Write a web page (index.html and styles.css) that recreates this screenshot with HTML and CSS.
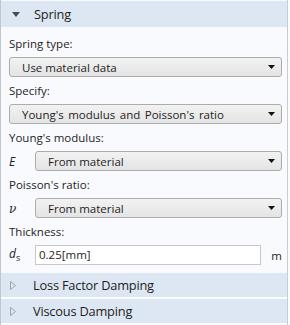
FILE: index.html
```html
<!DOCTYPE html>
<html lang="en">
<head>
  <meta charset="UTF-8">
  <title>Spring settings</title>
  <link rel="stylesheet" href="styles.css">
</head>
<body>
  <div class="panel">
    <div class="section-head">
      <svg class="caret" width="8" height="5" viewBox="0 0 8 5"><path d="M0 0H8L4 5Z" fill="#4a4a4a"/></svg>
      <span>Spring</span>
    </div>
    <div class="section-body">
      <div class="lbl">Spring type:</div>
      <div class="select"><span>Use material data</span><svg class="arrow" width="7" height="4" viewBox="0 0 7 4"><path d="M0 0H7L3.5 4Z" fill="#111"/></svg></div>

      <div class="lbl">Specify:</div>
      <div class="select"><span class="wide">Young's modulus and Poisson's ratio</span><svg class="arrow" width="7" height="4" viewBox="0 0 7 4"><path d="M0 0H7L3.5 4Z" fill="#111"/></svg></div>

      <div class="lbl">Young's modulus:</div>
      <div class="row">
        <span class="sym"><i>E</i></span>
        <div class="select"><span>From material</span><svg class="arrow" width="7" height="4" viewBox="0 0 7 4"><path d="M0 0H7L3.5 4Z" fill="#111"/></svg></div>
      </div>

      <div class="lbl">Poisson's ratio:</div>
      <div class="row">
        <span class="sym"><i class="nu">ν</i></span>
        <div class="select"><span>From material</span><svg class="arrow" width="7" height="4" viewBox="0 0 7 4"><path d="M0 0H7L3.5 4Z" fill="#111"/></svg></div>
      </div>

      <div class="lbl">Thickness:</div>
      <div class="row">
        <span class="sym"><i>d</i><sub>s</sub></span>
        <div class="input">0.25[mm]</div>
        <span class="unit">m</span>
      </div>
    </div>
    <div class="section-head closed">
      <svg class="caret" width="6" height="9" viewBox="0 0 6 9"><path d="M0.5 0.5L5.5 4.5L0.5 8.5Z" fill="none" stroke="#a0a4aa"/></svg>
      <span>Loss Factor Damping</span>
    </div>
    <div class="section-head closed">
      <svg class="caret" width="6" height="9" viewBox="0 0 6 9"><path d="M0.5 0.5L5.5 4.5L0.5 8.5Z" fill="none" stroke="#a0a4aa"/></svg>
      <span>Viscous Damping</span>
    </div>
  </div>
</body>
</html>
```

FILE: styles.css
```css
/* Settings panel */
body { margin: 0; background: #fdfdfe; font-family: 'Open Sans', 'Noto Sans', sans-serif; font-size: 11.5px; color: #1e1e1e; }
.panel {
  width: 288px; height: 325px; box-sizing: border-box;
  border-left: 1px solid #c2c6cc; border-right: 1px solid #c9ccd4;
  background: #f8fafd; padding-top: 1px; overflow: hidden;
}

.section-head {
  display: flex; align-items: center;
  height: 26px; background: #dde7f3;
  font-size: 12.8px; letter-spacing: -0.2px;
}
.section-head .caret { margin: 1px 14px 0 11px; flex: none; }
.section-head.closed { height: 24px; margin-bottom: 1px; border-bottom: 1px solid #fff; }
.section-head.closed .caret { margin: 0 17px 0 9px; }

.section-body { padding: 3px 5px 8px 8px; }
.lbl { height: 27px; line-height: 27px; }

.select {
  display: flex; align-items: center; justify-content: space-between;
  height: 20px; box-sizing: border-box; padding: 0 6px 0 12px;
  border: 1px solid #acacac; border-radius: 3px;
  background: linear-gradient(#f2f2f2, #e4e4e4);
}
.select .wide { word-spacing: 1.5px; }
.select .arrow { flex: none; }

.row { display: flex; align-items: center; }
.row .select { flex: 1; }
.sym { width: 26px; flex: none; font-size: 12px; }
.sym .nu { font-family: 'DejaVu Serif', serif; }
.sym sub { font-size: 9px; }

.input {
  flex: 1; height: 20px; box-sizing: border-box; line-height: 18px;
  padding-left: 3px; background: #fff; border: 1px solid #c8c8c8;
}
.unit { width: 21px; text-align: right; flex: none; }
```
